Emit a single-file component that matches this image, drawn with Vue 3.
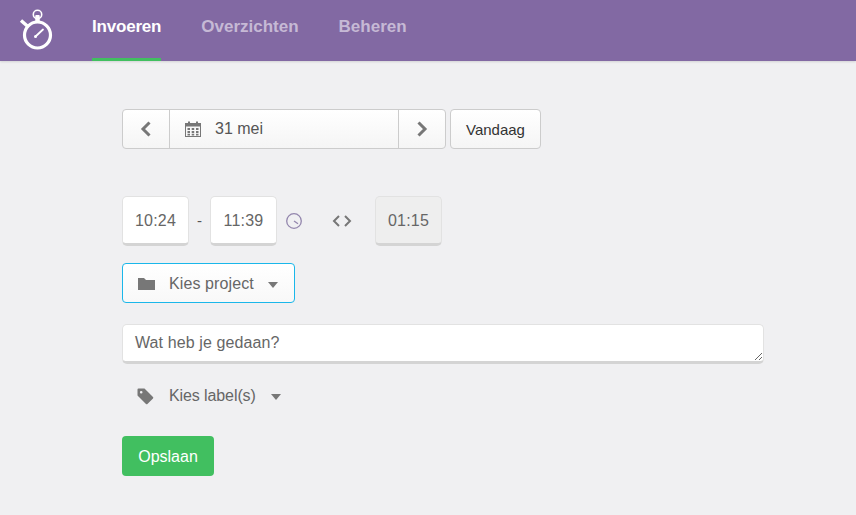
<script setup>
const tabs = [
  { label: 'Invoeren', active: true },
  { label: 'Overzichten', active: false },
  { label: 'Beheren', active: false }
]
</script>

<template>
  <div class="page">
    <header class="topbar">
      <svg class="logo" width="36" height="42" viewBox="0 0 36 42" fill="none" stroke="#fff">
        <circle cx="18.500" cy="26" r="13" stroke-width="3.200" />
        <circle cx="18.500" cy="5.500" r="4.200" stroke-width="1.600" />
        <path d="M16.800 6.500v5.500h3.400V6.500z" stroke-width="1" fill="#fff" />
        <path d="M2 11.500l6.300 5.500" stroke-width="3.400" />
        <circle cx="16.500" cy="27.500" r="1.500" fill="#fff" stroke="none" />
        <path d="M16.500 27.500l7.500-7" stroke-width="1.800" stroke-linecap="round" />
      </svg>
      <nav class="tabs">
        <a v-for="tab in tabs" :key="tab.label" class="tab" :class="{ active: tab.active }">{{ tab.label }}</a>
      </nav>
    </header>

    <main class="content">
      <div class="date-row">
        <div class="date-group">
          <button class="seg arrow">
            <svg width="14" height="18" viewBox="0 0 14 18" fill="none" stroke="#777" stroke-width="3"><path d="M10.500 2.500L4 9l6.500 6.500" /></svg>
          </button>
          <div class="seg date">
            <svg width="16" height="16" viewBox="0 0 16 16" fill="#777">
              <path d="M0 2h3V0.500h2V2h6V0.500h2V2h3v14H0z" />
              <path fill="#f8f8f8" d="M1 5.500h14V15H1z" />
              <path d="M2.500 7h2.500v2H2.500zM6.700 7h2.500v2H6.700zM11 7h2.500v2H11zM2.500 10h2.500v2H2.500zM6.700 10h2.500v2H6.700zM11 10h2.500v2H11zM2.500 12.800h2.500v1.600H2.500zM6.700 12.800h2.500v1.600H6.700zM11 12.800h2.500v1.600H11z" />
            </svg>
            <span>31 mei</span>
          </div>
          <button class="seg arrow">
            <svg width="14" height="18" viewBox="0 0 14 18" fill="none" stroke="#777" stroke-width="3"><path d="M3.500 2.500L10 9l-6.500 6.500" /></svg>
          </button>
        </div>
        <button class="today">Vandaag</button>
      </div>

      <div class="time-row">
        <div class="time">10:24</div>
        <span class="dash">-</span>
        <div class="time">11:39</div>
        <svg class="clock" width="18" height="18" viewBox="0 0 18 18" fill="none" stroke="#9386ad">
          <circle cx="9" cy="9" r="7.300" stroke-width="1.300" />
          <path d="M9 9l4 2.800" stroke-width="1.300" />
        </svg>
        <svg class="code" width="20" height="12" viewBox="0 0 20 12" fill="none" stroke="#777" stroke-width="2">
          <path d="M7 1L2 6l5 5M13 1l5 5-5 5" />
        </svg>
        <div class="time total">01:15</div>
      </div>

      <button class="project">
        <svg width="17" height="14" viewBox="0 0 17 14" fill="#777"><path d="M0 1h6l2 2h9v10H0z" /></svg>
        <span>Kies project</span>
        <i class="caret"></i>
      </button>

      <textarea class="note" placeholder="Wat heb je gedaan?"></textarea>

      <div class="labels">
        <svg width="17" height="17" viewBox="0 0 17 17" fill="#777">
          <path d="M0.500 1.500a1 1 0 0 1 1-1h6l8.500 8.500a1 1 0 0 1 0 1.400L10.400 16a1 1 0 0 1-1.400 0L0.500 7.500zM4.200 3a1.300 1.300 0 1 0 0 2.600a1.300 1.300 0 0 0 0-2.600z" fill-rule="evenodd" />
        </svg>
        <span>Kies label(s)</span>
        <i class="caret"></i>
      </div>

      <button class="save">Opslaan</button>
    </main>
  </div>
</template>

<style>
html, body { margin: 0; background: #f0f0f2; }
</style>

<style scoped>
.page {
  min-height: 515px;
  background: #f0f0f2;
  font-family: "Liberation Sans", Arial, sans-serif;
  color: #666;
  overflow: hidden;
}
.topbar {
  height: 61px;
  background: #8269a3;
  display: flex;
  padding-left: 19px;
  box-shadow: 0 1px 2px rgba(0, 0, 0, 0.12);
  box-sizing: border-box;
}
.logo { margin-top: 9px; }
.tabs { display: flex; gap: 40px; margin-left: 37px; }
.tab {
  font-size: 17px;
  font-weight: bold;
  line-height: 54px;
  color: #c6b9d5;
  box-sizing: border-box;
  height: 61px;
}
.tab.active { color: #fff; letter-spacing: -0.2px; border-bottom: 3px solid #41bf60; }
.content {
  padding: 48px 0 0 122px;
  display: flex;
  flex-direction: column;
  align-items: flex-start;
}
button { font-family: inherit; margin: 0; padding: 0; }
.date-row { display: flex; gap: 4px; }
.date-group {
  display: flex;
  height: 40px;
  box-sizing: border-box;
  border: 1px solid #ccc;
  border-radius: 4px;
  background: linear-gradient(#fff, #f5f5f5);
}
.seg { background: transparent; border: 0; display: flex; align-items: center; box-sizing: border-box; }
.arrow { width: 46px; justify-content: center; }
.date {
  width: 230px;
  border-left: 1px solid #ccc;
  border-right: 1px solid #ccc;
  padding-left: 15px;
  gap: 14px;
  font-size: 16px;
  color: #555;
}
.today {
  width: 91px;
  height: 40px;
  border: 1px solid #ccc;
  border-radius: 4px;
  background: linear-gradient(#fff, #f5f5f5);
  font-size: 15px;
  color: #333;
}
.time-row { display: flex; align-items: center; margin-top: 47px; height: 50px; }
.time {
  width: 67px;
  height: 50px;
  box-sizing: border-box;
  background: #fff;
  border: 1px solid #e2e2e2;
  border-bottom: 3px solid #d4d4d4;
  border-radius: 5px;
  padding-top: 2px;
  display: flex;
  align-items: center;
  justify-content: center;
  font-size: 16px;
  letter-spacing: 0.2px;
  color: #666;
}
.dash { width: 21px; text-align: center; font-size: 15px; color: #555; margin-bottom: 2px; }
.clock { margin-left: 8px; }
.code { margin-left: 29px; }
.total { margin-left: 23px; background: #eee; }
.project {
  margin-top: 17px;
  width: 173px;
  height: 40px;
  box-sizing: border-box;
  border: 1px solid #1ab7ea;
  border-radius: 4px;
  background: linear-gradient(#fff, #f8f8f8);
  display: flex;
  align-items: center;
  padding: 2px 0 0 15px;
  font-size: 16px;
  letter-spacing: 0.1px;
  color: #666;
}
.project span { margin-left: 14px; }
.caret {
  width: 0;
  height: 0;
  border-left: 5px solid transparent;
  border-right: 5px solid transparent;
  border-top: 6px solid #777;
  margin-left: 14px;
  margin-top: 2px;
}
.note {
  margin-top: 21px;
  width: 642px;
  height: 40px;
  box-sizing: border-box;
  border: 1px solid #e2e2e2;
  border-bottom: 3px solid #d4d4d4;
  border-radius: 5px;
  background: #fff;
  padding: 9px 12px;
  font-family: inherit;
  font-size: 16px;
  letter-spacing: 0.1px;
  color: #666;
  outline: none;
  display: block;
}
.note::placeholder { color: #666; opacity: 1; }
.labels {
  margin-top: 20px;
  height: 24px;
  padding-left: 15px;
  display: flex;
  align-items: center;
  font-size: 16px;
  letter-spacing: -0.1px;
}
.labels span { margin-left: 15px; }
.labels .caret { margin-left: 15px; }
.save {
  margin-top: 28px;
  width: 92px;
  height: 40px;
  border: 0;
  border-radius: 4px;
  background: #41bf60;
  color: #fff;
  padding-top: 2px;
  font-size: 16px;
}
</style>
